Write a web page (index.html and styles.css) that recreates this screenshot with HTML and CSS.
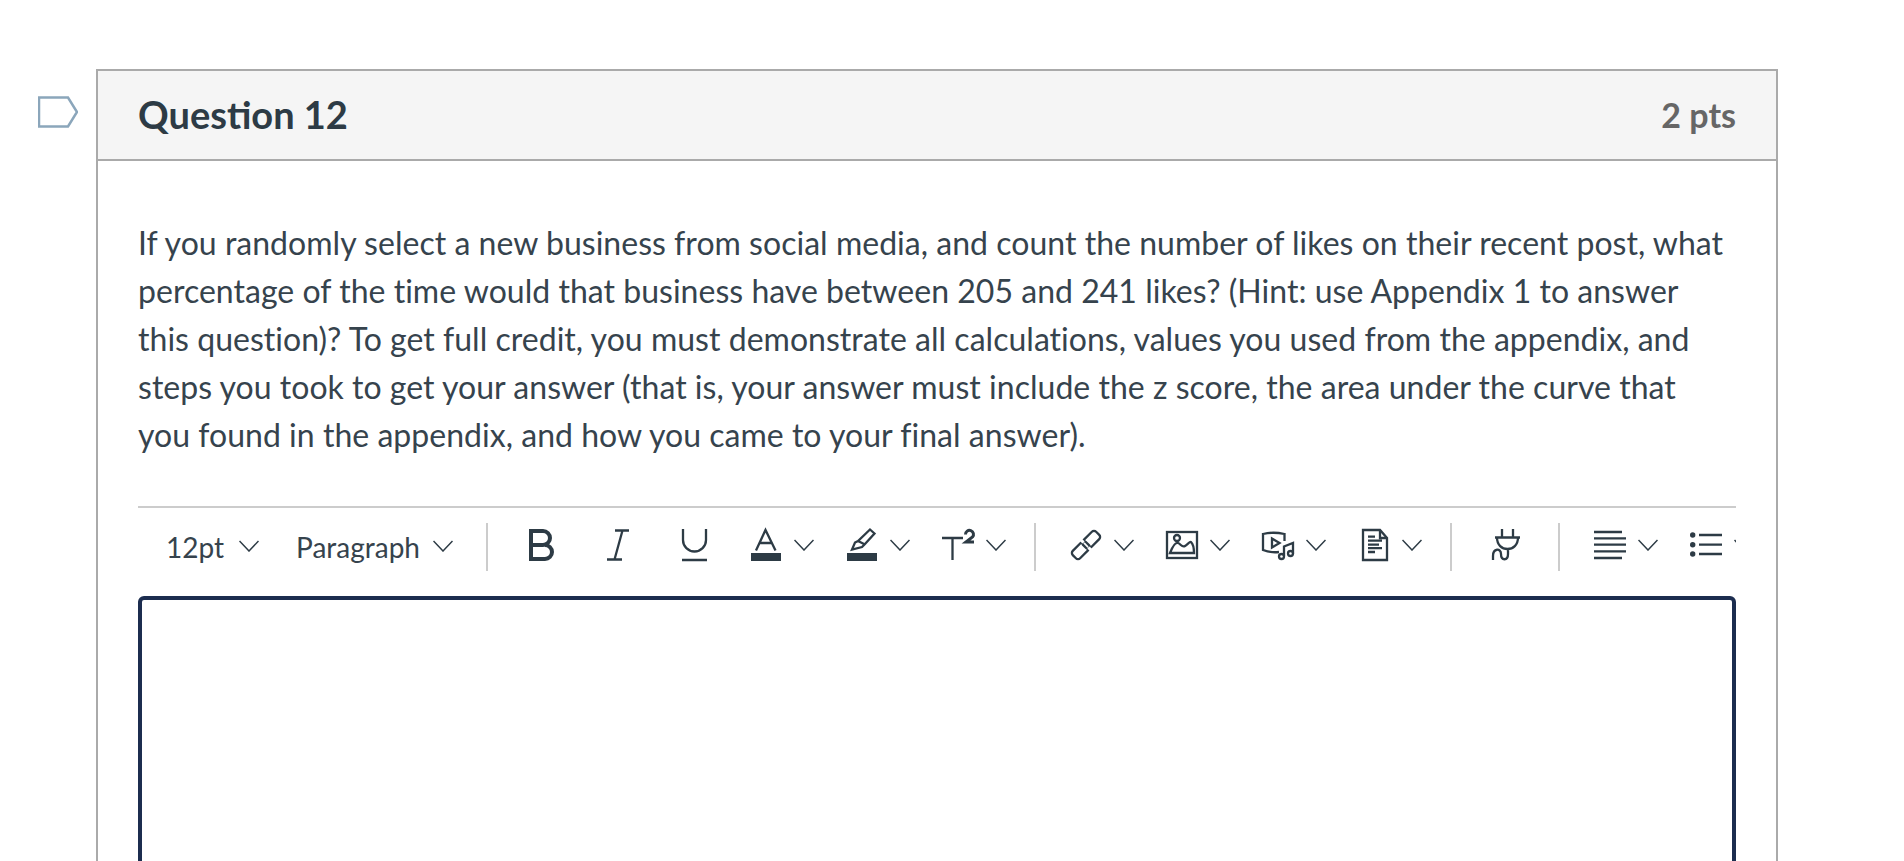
FILE: index.html
```html
<!DOCTYPE html>
<html lang="en">
  <head>
    <meta charset="UTF-8" />
    <meta name="viewport" content="width=device-width, initial-scale=1.0" />
    <title>Question 12</title>
    <link rel="stylesheet" href="styles.css">
  </head>
  <body>
    <div class="page">
      <svg class="flag" width="40" height="32" viewBox="0 0 40 32" aria-label="Flag question">
        <path d="M1 1.5H30L39 16L30 30.5H1Z" />
      </svg>

      <div class="question">
        <div class="question-header">
          <h2>Question 12</h2>
          <span class="points">2 pts</span>
        </div>

        <div class="question-body">
          <p>If you randomly select a new business from social media, and count the number of likes on their recent post, what percentage of the time would that business have between 205 and 241 likes? (Hint: use Appendix 1 to answer this question)? To get full credit, you must demonstrate all calculations, values you used from the appendix, and steps you took to get your answer (that is, your answer must include the z score, the area under the curve that you found in the appendix, and how you came to your final answer).</p>

          <div class="toolbar">
            <div class="tool select select-size">12pt
              <svg class="chev" viewBox="0 0 20 12"><path d="M.5 1L10 11L19.5 1" /></svg>
            </div>
            <div class="tool select select-wide">Paragraph
              <svg class="chev" viewBox="0 0 20 12"><path d="M.5 1L10 11L19.5 1" /></svg>
            </div>
            <div class="sep sep-first"></div>

            <div class="tool plain">
              <svg class="icon" viewBox="0 0 32 32" aria-label="Bold"><path class="heavy" d="M5 16H17a7 7 0 0 0 0-14H5V30H19a7 7 0 0 0 0-14" /></svg>
            </div>
            <div class="tool plain">
              <svg class="icon" viewBox="0 0 32 32" aria-label="Italic"><path d="M13 1.5H27M5 30.5H20M20.5 1.5L12.5 30.5" /></svg>
            </div>
            <div class="tool plain plain-last">
              <svg class="icon" viewBox="0 0 32 32" aria-label="Underline"><path d="M5 0V11a11.5 11.5 0 0 0 23 0V0M4 31H29" /></svg>
            </div>
            <div class="tool">
              <svg class="icon" viewBox="0 0 32 32" aria-label="Text color"><path d="M6 21.5L15.5 1L25.5 21.5M9 14H22" /><rect class="solid" x="1" y="24" width="30" height="8" /></svg>
              <svg class="chev" viewBox="0 0 20 12"><path d="M.5 1L10 11L19.5 1" /></svg>
            </div>
            <div class="tool">
              <svg class="icon" viewBox="0 0 32 32" aria-label="Highlight"><path d="M24 .5L28.500 4.500L19 15L16 18L6 20.500L9 13.500L12 12ZM12 12L19 15.500" /><rect class="solid" x="1" y="24" width="30" height="8" /></svg>
              <svg class="chev" viewBox="0 0 20 12"><path d="M.5 1L10 11L19.5 1" /></svg>
            </div>
            <div class="tool">
              <svg class="icon" viewBox="0 0 32 32" aria-label="Superscript"><path d="M0 9H21M10.5 9V31" /><path class="mid" d="M23.5 5.5a4 4 0 1 1 7 2.5L24 13H32" /></svg>
              <svg class="chev" viewBox="0 0 20 12"><path d="M.5 1L10 11L19.5 1" /></svg>
            </div>
            <div class="sep"></div>

            <div class="tool">
              <svg class="icon" viewBox="0 0 32 32" aria-label="Link">
                <g transform="rotate(-45 16 16)">
                  <rect x="-0.5" y="10.800" width="18.500" height="10.400" rx="3" />
                  <rect x="14" y="10.800" width="18.500" height="10.400" rx="3" />
                  <path class="gap" d="M14.500 10.800H17.500M14.500 21.200H17.500" />
                </g>
              </svg>
              <svg class="chev" viewBox="0 0 20 12"><path d="M.5 1L10 11L19.5 1" /></svg>
            </div>
            <div class="tool">
              <svg class="icon" viewBox="0 0 32 32" aria-label="Image">
                <rect x="1" y="3" width="30" height="26" />
                <circle cx="11" cy="9" r="3" />
                <path d="M4 24C6 19 9 13 12 14C15 15 16 19 19 17C22 15 24 12 25 13C27 15 28 20 28 24Z" />
              </svg>
              <svg class="chev" viewBox="0 0 20 12"><path d="M.5 1L10 11L19.5 1" /></svg>
            </div>
            <div class="tool">
              <svg class="icon" viewBox="0 0 32 32" aria-label="Media">
                <path d="M22.5 12V5Q11 2.500 1 5V21Q9 24 17 23M10 9.500V18.500L17.500 14Z" />
                <circle cx="19.500" cy="27.500" r="2.500" />
                <circle cx="28.500" cy="24.500" r="2.500" />
                <path d="M22 27V17.500L31 14V24.500" />
              </svg>
              <svg class="chev" viewBox="0 0 20 12"><path d="M.5 1L10 11L19.5 1" /></svg>
            </div>
            <div class="tool">
              <svg class="icon" viewBox="0 0 32 32" aria-label="Document">
                <path d="M5 1H22L29 9V31H5Z" />
                <path d="M22 1V9H29M10 7.700H17M10 11.700H24M10 15.700H21M10 19.200H24M10 23H17" />
              </svg>
              <svg class="chev" viewBox="0 0 20 12"><path d="M.5 1L10 11L19.5 1" /></svg>
            </div>
            <div class="sep"></div>

            <div class="tool plain">
              <svg class="icon" viewBox="0 0 32 32" aria-label="Apps">
                <path d="M10 0V8.500M21 0V8.500M3 8.500H28M5 8.500C5 16 10 20 15.500 20C21 20 26 16 26 8.500M16 20V25C16 32 9 32 9 25C9 19 1 19 1 27V31" />
              </svg>
            </div>
            <div class="sep"></div>

            <div class="tool">
              <svg class="icon" viewBox="0 0 32 32" aria-label="Align"><path d="M0 3H28M0 9.300H32M0 15.700H32M0 22.300H32M0 29H28" /></svg>
              <svg class="chev" viewBox="0 0 20 12"><path d="M.5 1L10 11L19.5 1" /></svg>
            </div>
            <div class="tool">
              <svg class="icon" viewBox="0 0 32 32" aria-label="List">
                <circle class="solid" cx="2.700" cy="6" r="2.700" />
                <circle class="solid" cx="2.700" cy="15.700" r="2.700" />
                <circle class="solid" cx="2.700" cy="25" r="2.700" />
                <path d="M9 6H32M9 15.700H32M9 25H32" />
              </svg>
              <svg class="chev" viewBox="0 0 20 12"><path d="M.5 1L10 11L19.5 1" /></svg>
            </div>
          </div>

          <div class="editor"></div>
        </div>
      </div>
    </div>
  </body>
</html>
```

FILE: styles.css
```css
html,
body {
  height: 100%;
  margin: 0;
  overflow: hidden;
}

body {
  font-family: "Lato", sans-serif;
  background-color: #fff;
  color: #2d3b45;
}

.page {
  display: flex;
  align-items: flex-start;
  gap: 18px;
  padding: 69px 0 0 38px;
}

.flag {
  flex: none;
  margin-top: 27px;
}

.flag path {
  fill: #fff;
  stroke: #8ba6bb;
  stroke-width: 2.5;
}

.question {
  flex: none;
  width: 1682px;
  border: 2px solid #aaa;
  box-sizing: border-box;
}

.question-header {
  display: flex;
  justify-content: space-between;
  align-items: center;
  height: 86px;
  padding: 0 40px 2px;
  background-color: #f5f5f5;
  border-bottom: 2px solid #aaa;
}

.question-header h2 {
  margin: 0;
  font-size: 38px;
  font-weight: 700;
}

.points {
  font-size: 34px;
  font-weight: 700;
  color: #666;
}

.question-body {
  padding: 58px 40px 0;
}

.question-body p {
  margin: 0;
  padding-right: 8px;
  font-size: 32px;
  line-height: 48px;
  letter-spacing: 0.025px;
  color: #36434d;
}

.toolbar {
  display: flex;
  align-items: flex-start;
  gap: 32px;
  height: 90px;
  margin-top: 47px;
  padding: 15px 0 0 28px;
  box-sizing: border-box;
  border-top: 2px solid #ccc;
  overflow: hidden;
}

.tool {
  flex: none;
  display: flex;
  align-items: center;
  gap: 12px;
  height: 32px;
  margin-top: 6px;
}

.plain {
  padding: 0 6px;
}

.plain-last {
  margin-right: 2px;
}

.select {
  box-sizing: content-box;
  padding-top: 2px;
  gap: 15px;
  font-size: 28px;
  color: #36434d;
}

.select .chev {
  margin-top: -2px;
}

.select-size {
  margin-right: 5px;
}

.select-wide {
  gap: 13px;
  margin-right: 5px;
}

.sep {
  flex: none;
  width: 2px;
  height: 48px;
  margin: 0 2px 0 -4px;
  background-color: #ccc;
}

.sep-first {
  margin-right: 0;
}

.icon {
  flex: none;
  width: 32px;
  height: 32px;
  overflow: visible;
}

.icon path,
.icon rect,
.icon circle {
  fill: none;
  stroke: #2d3b45;
  stroke-width: 2.3;
}

.icon .heavy {
  stroke-width: 4;
}

.icon .mid {
  stroke-width: 3;
}

.icon .gap {
  stroke: #fff;
  stroke-width: 3.500;
}

.icon .solid {
  fill: #2d3b45;
  stroke: none;
}

.chev {
  flex: none;
  width: 20px;
  height: 12px;
}

.chev path {
  fill: none;
  stroke: #2d3b45;
  stroke-width: 1.5;
}

.editor {
  height: 400px;
  border: 4px solid #1c2d4f;
  border-radius: 6px;
}
```
